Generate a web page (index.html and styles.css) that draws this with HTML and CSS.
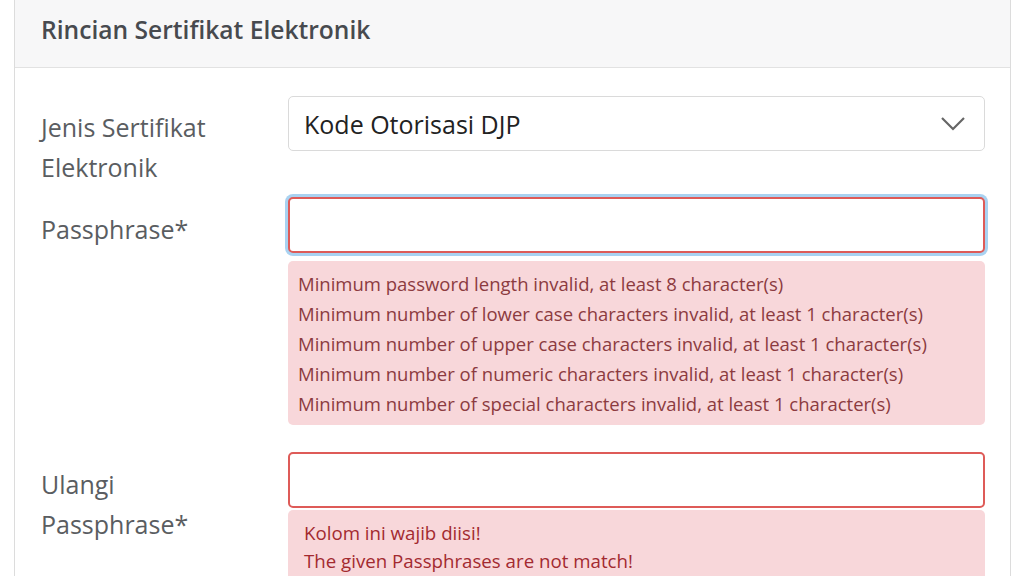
FILE: index.html
```html
<!DOCTYPE html>
<html lang="id">
<head>
<meta charset="utf-8">
<title>Rincian Sertifikat Elektronik</title>
<link rel="stylesheet" href="styles.css">
</head>
<body>
<div class="card">
  <div class="card-header">Rincian Sertifikat Elektronik</div>
  <div class="card-body">
    <div class="form-row">
      <label class="form-label">Jenis Sertifikat Elektronik</label>
      <div class="form-field">
        <div class="select">
          <span class="select-text">Kode Otorisasi DJP</span>
          <svg class="chevron" width="26" height="16" viewBox="0 0 26 16"><polyline points="2,2 13,13 24,2" fill="none" stroke="#666" stroke-width="2.2"/></svg>
        </div>
      </div>
    </div>
    <div class="form-row row-pass">
      <label class="form-label">Passphrase*</label>
      <div class="form-field">
        <div class="input is-invalid is-focused"></div>
        <div class="error-box">
          <div>Minimum password length invalid, at least 8 character(s)</div>
          <div>Minimum number of lower case characters invalid, at least 1 character(s)</div>
          <div>Minimum number of upper case characters invalid, at least 1 character(s)</div>
          <div>Minimum number of numeric characters invalid, at least 1 character(s)</div>
          <div>Minimum number of special characters invalid, at least 1 character(s)</div>
        </div>
      </div>
    </div>
    <div class="form-row row-repeat">
      <label class="form-label">Ulangi Passphrase*</label>
      <div class="form-field">
        <div class="input is-invalid"></div>
        <div class="error-box error-box-2">
          <div>Kolom ini wajib diisi!</div>
          <div>The given Passphrases are not match!</div>
        </div>
      </div>
    </div>
  </div>
</div>
</body>
</html>
```

FILE: styles.css
```css
html, body {
  margin: 0;
  padding: 0;
  background: #ffffff;
  overflow: hidden;
}
body {
  font-family: "Open Sans", "Noto Sans", sans-serif;
  width: 1024px;
  height: 576px;
}
.card {
  margin-left: 14px;
  width: 995px;
  border: 1px solid #dcdcdc;
  border-top: none;
  background: #fff;
}
.card-header {
  background: #f7f7f8;
  border-bottom: 1px solid #e2e2e2;
  padding: 12px 26px 19px;
  height: 36px;
  line-height: 36px;
  font-size: 24.6px;
  font-weight: 600;
  color: #474a4f;
}
.card-body {
  padding: 28px 25px 0 26px;
}
.form-row {
  display: flex;
  margin-bottom: 10px;
}
.row-pass {
  margin-bottom: 27px;
}
.form-label {
  width: 247px;
  flex: none;
  padding-top: 11px;
  font-size: 25px;
  line-height: 40px;
  color: #5a5d61;
  padding-right: 30px;
  box-sizing: border-box;
}
.row-pass .form-label,
.row-repeat .form-label {
  padding-top: 12px;
}
.form-field {
  flex: 1;
  display: flex;
  flex-direction: column;
}
.select {
  height: 55px;
  border: 1px solid #dadada;
  border-radius: 5px;
  box-sizing: border-box;
  display: flex;
  align-items: center;
  justify-content: space-between;
  padding: 0 18px 0 15px;
}
.select-text {
  font-size: 25px;
  color: #222;
}
.chevron {
  display: block;
}
.input {
  height: 56px;
  border: 1px solid #ccc;
  border-radius: 5px;
  box-sizing: border-box;
  background: #fff;
}
.input.is-invalid {
  border: 2px solid #de5b58;
}
.input.is-focused {
  box-shadow: 0 0 0 3px #a9d2f1;
}
.error-box {
  margin-top: 8px;
  background: #f8d7da;
  border-radius: 5px;
  padding: 8px 10px 6px;
  font-size: 18.5px;
  line-height: 30px;
  color: #8c3b40;
  white-space: nowrap;
}
.error-box-2 {
  margin-top: 2px;
  padding: 9px 16px 5px;
  line-height: 28px;
  font-size: 18.7px;
  color: #a32a30;
}
```
